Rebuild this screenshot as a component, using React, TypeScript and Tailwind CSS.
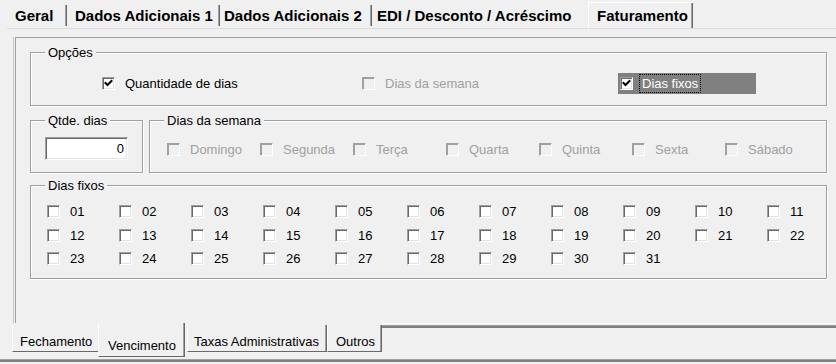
import React from 'react'

function Check({ checked, disabled }: { checked?: boolean; disabled?: boolean }) {
  return (
    <span
      className={`relative inline-block h-[13px] w-[13px] shrink-0 border border-t-[#a0a0a0] border-l-[#a0a0a0] border-r-white border-b-white ${
        disabled
          ? 'bg-[#f0f0f0] shadow-[inset_1px_1px_0_#a0a0a0,inset_-1px_-1px_0_#f0f0f0]'
          : 'bg-white shadow-[inset_1px_1px_0_#696969,inset_-1px_-1px_0_#e3e3e3]'
      }`}
    >
      {checked && (
        <svg className="absolute left-0 top-0" width="11" height="11" viewBox="0 0 11 11">
          <path d="M2.5 5 L4.5 7 L8.5 3" fill="none" stroke="#000" strokeWidth="2" strokeLinecap="square" />
        </svg>
      )}
    </span>
  )
}

function CheckItem({
  label,
  checked,
  disabled,
  className = '',
}: {
  label: string
  checked?: boolean
  disabled?: boolean
  className?: string
}) {
  return (
    <div className={`flex h-[15px] items-center ${className}`}>
      <Check checked={checked} disabled={disabled} />
      <span className={`ml-[10px] whitespace-nowrap ${disabled ? 'text-[#a0a0a0]' : 'text-black'}`}>{label}</span>
    </div>
  )
}

function Group({
  label,
  className = '',
  children,
}: {
  label: string
  className?: string
  children?: React.ReactNode
}) {
  return (
    <div className={`relative border border-[#a0a0a0] shadow-[inset_1px_1px_0_#fff,1px_1px_0_#fff] ${className}`}>
      <span className="absolute -top-[8px] left-[14px] bg-[#f0f0f0] px-[3px] leading-[15px]">{label}</span>
      {children}
    </div>
  )
}

function Sep() {
  return (
    <div className="mt-[5px] flex h-[21px] w-[2px] shrink-0">
      <div className="w-[1px] bg-[#a0a0a0]" />
      <div className="w-[1px] bg-[#696969]" />
    </div>
  )
}

const weekDays = ['Domingo', 'Segunda', 'Terça', 'Quarta', 'Quinta', 'Sexta', 'Sábado']
const days = Array.from({ length: 31 }, (_, i) => String(i + 1).padStart(2, '0'))

export default function App() {
  return (
    <div className="flex h-[364px] w-[836px] flex-col overflow-hidden bg-[#f0f0f0] font-['Liberation_Sans',Arial,sans-serif] text-[13px] leading-[15px] text-black">
      {/* top tabs */}
      <div className="flex h-[28px] shrink-0 text-[15px] font-bold leading-[24px]">
        <div className="w-[15px] shrink-0" />
        <div className="w-[50px] shrink-0 whitespace-nowrap pt-[4px]">Geral</div>
        <Sep />
        <div className="w-[151px] shrink-0 whitespace-nowrap pl-[8px] pt-[4px]">Dados Adicionais 1</div>
        <Sep />
        <div className="w-[150px] shrink-0 whitespace-nowrap pl-[4px] pt-[4px]">Dados Adicionais 2</div>
        <Sep />
        <div className="w-[216px] shrink-0 whitespace-nowrap pl-[5px] pt-[4px]">EDI / Desconto / Acréscimo</div>
        <div className="mt-[2px] flex h-[27px] w-[105px] shrink-0 border-l border-t border-white">
          <div className="flex-1 whitespace-nowrap pl-[8px] pt-[1px]">Faturamento</div>
          <div className="w-[1px] bg-[#a0a0a0]" />
          <div className="w-[1px] bg-[#696969]" />
        </div>
      </div>
      <div className="ml-[7px] h-[1px] shrink-0 bg-[#dcdcdc]" />

      {/* inner tab control page */}
      <div className="ml-[13px] mt-[8px] h-[286px] shrink-0 border-l border-[#c8c8c8]">
        <div className="ml-[1px] h-full border-l border-t border-[#a0a0a0] pl-[14px] pt-[14px]">
          <Group label="Opções" className="h-[54px] w-[797px]">
            <div className="flex h-[21px] items-center pl-[71px] pt-0 mt-[20px]">
              <CheckItem label="Quantidade de dias" checked className="w-[260px]" />
              <CheckItem label="Dias da semana" disabled className="w-[256px]" />
              <div className="flex h-[21px] w-[138px] items-center bg-[#808080] pl-[2px]">
                <Check checked />
                <span className="ml-[6px] border border-dotted border-black px-[2px] leading-[17px] text-white">
                  Dias fixos
                </span>
              </div>
            </div>
          </Group>

          <div className="mt-[14px] flex gap-[6px]">
            <Group label="Qtde. dias" className="h-[53px] w-[113px]">
              <div className="ml-[14px] mt-[16px] h-[23px] w-[83px] border border-t-[#a0a0a0] border-l-[#a0a0a0] border-r-white border-b-white bg-white pr-[3px] text-right leading-[21px] shadow-[inset_1px_1px_0_#696969,inset_-1px_-1px_0_#e3e3e3]">
                0
              </div>
            </Group>
            <Group label="Dias da semana" className="h-[53px] w-[678px]">
              <div className="mt-[21px] flex pl-[17px]">
                {weekDays.map((d) => (
                  <CheckItem key={d} label={d} disabled className="w-[93px] shrink-0" />
                ))}
              </div>
            </Group>
          </div>

          <Group label="Dias fixos" className="mt-[12px] h-[94px] w-[797px]">
            <div className="grid grid-cols-[repeat(11,72px)] auto-rows-[23.5px] items-center pl-[16px] pt-[14px]">
              {days.map((d) => (
                <CheckItem key={d} label={d} />
              ))}
            </div>
          </Group>
        </div>
      </div>

      {/* bottom tabs */}
      <div className="flex h-[36px] shrink-0">
        <div className="w-[12px] shrink-0" />
        <div className="mt-[2px] h-[27px] w-[86px] shrink-0 whitespace-nowrap border-b border-l border-b-[#696969] border-l-white pl-[7px] pt-[9px]">
          Fechamento
        </div>
        <div className="flex h-[34px] w-[87px] shrink-0 border-b border-l border-b-[#696969] border-l-white">
          <div className="flex-1 whitespace-nowrap pl-[9px] pt-[15px]">Vencimento</div>
          <div className="w-[1px] bg-[#a0a0a0]" />
          <div className="w-[1px] bg-[#696969]" />
        </div>
        <div className="w-[2px] shrink-0" />
        <div className="mt-[2px] flex h-[27px] w-[140px] shrink-0 border-b border-l border-b-[#696969] border-l-white">
          <div className="flex-1 whitespace-nowrap pl-[6px] pt-[9px]">Taxas Administrativas</div>
          <div className="w-[1px] bg-[#a0a0a0]" />
          <div className="w-[1px] bg-[#696969]" />
        </div>
        <div className="mt-[2px] flex h-[27px] w-[55px] shrink-0 border-b border-l border-b-[#696969] border-l-white">
          <div className="flex-1 whitespace-nowrap pl-[8px] pt-[9px]">Outros</div>
          <div className="w-[1px] bg-[#a0a0a0]" />
          <div className="w-[1px] bg-[#696969]" />
        </div>
        <div className="flex-1">
          <div className="h-[2px] border-t border-white" />
          <div className="h-[3px] border-t border-[#a0a0a0] bg-[#808080]" />
        </div>
      </div>
      <div className="h-[3px] shrink-0 border-t border-[#a0a0a0] bg-[#808080]" />
    </div>
  )
}
